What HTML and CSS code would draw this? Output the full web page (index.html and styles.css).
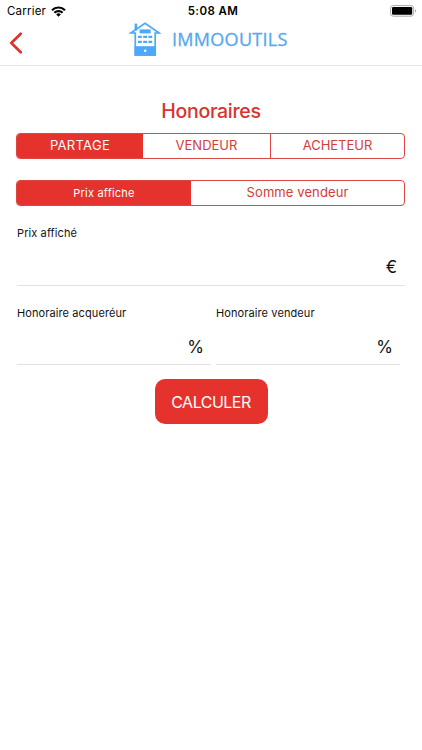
FILE: index.html
```html
<!DOCTYPE html>
<html lang="fr">
<head>
    <meta charset="UTF-8">
    <meta name="viewport" content="width=device-width, initial-scale=1.0">
    <title>Immooutils - Honoraires</title>
    <link rel="stylesheet" href="styles.css">
</head>
<body>
    <div class="status-bar">
        <div class="carrier">
            <span>Carrier</span>
            <svg class="wifi" width="15" height="11" viewBox="0 0 15 11" fill="none" stroke="#000" stroke-width="2.2">
                <path d="M1 4.2a9.2 9.2 0 0 1 13 0"/>
                <path d="M3.4 6.8a5.8 5.8 0 0 1 8.2 0"/>
                <path d="M7.5 10.7L5.2 8.5a3.2 3.2 0 0 1 4.6 0z" fill="#000" stroke="none"/>
            </svg>
        </div>
        <div class="time">5:08 AM</div>
        <svg class="battery" width="27" height="12" viewBox="0 0 27 12">
            <rect x="0.6" y="0.6" width="23" height="10.6" rx="2.6" fill="#fff" stroke="#a8a8a8"/>
            <rect x="2" y="2" width="20.2" height="7.8" rx="1.2" fill="#000"/>
            <path d="M25 4.2c1.6.5 1.6 2.9 0 3.4z" fill="#a8a8a8"/>
        </svg>
    </div>

    <header class="header">
        <a class="back" href="#" aria-label="Retour">
            <svg width="14" height="22" viewBox="0 0 14 22" fill="none" stroke="#dc342f" stroke-width="2.7" stroke-linecap="round" stroke-linejoin="round">
                <path d="M11.7 1.7L2.3 11l9.4 9.3"/>
            </svg>
        </a>
        <div class="logo">
            <svg width="32" height="35" viewBox="0 0 32 35" fill="none" stroke="#4ca8f8">
                <path d="M6.9 8.5V1.6" stroke-width="2.6"/>
                <path d="M1.8 11L16 1.4 30.2 11h-4V33H6.3V11z" stroke-width="1.7"/>
                <rect x="5.5" y="24.2" width="21.5" height="9.6" fill="#4ca8f8" stroke="none"/>
                <rect x="10.6" y="7.4" width="11" height="4" fill="#4ca8f8" stroke="none"/>
                <path d="M9 14.9h3.8m1.4 0h3.8m1.4 0h3.8M9 19.9h3.8m1.4 0h3.8m1.4 0h3.8" stroke-width="2.4"/>
                <circle cx="16.2" cy="28.8" r="1.3" fill="#fff" stroke="none"/>
            </svg>
            <span class="logo-text">IMMOOUTILS</span>
        </div>
    </header>

    <main class="container">
        <h1>Honoraires</h1>

        <div class="segment segment-three">
            <button class="tab active">PARTAGE</button>
            <button class="tab">VENDEUR</button>
            <button class="tab">ACHETEUR</button>
        </div>

        <div class="segment segment-two">
            <button class="tab active small">Prix affiche</button>
            <button class="tab wide">Somme vendeur</button>
        </div>

        <div class="field">
            <div class="label">Prix affiché</div>
            <div class="unit">€</div>
        </div>

        <div class="row">
            <div class="field">
                <div class="label">Honoraire acqueréur</div>
                <div class="unit">%</div>
            </div>
            <div class="field">
                <div class="label">Honoraire vendeur</div>
                <div class="unit">%</div>
            </div>
        </div>

        <button class="btn">CALCULER</button>
    </main>
</body>
</html>
```
FILE: styles.css
```css
* { margin: 0; padding: 0; box-sizing: border-box; }

body {
    font-family: 'Inter', sans-serif;
    background: #fff;
    color: #111;
}

button {
    font-family: inherit;
    border: none;
    background: none;
}

.status-bar {
    display: grid;
    grid-template-columns: 1fr auto 1fr;
    align-items: center;
    height: 22px;
    padding: 0 5px 0 7px;
    color: #000;
}

.carrier {
    display: flex;
    align-items: center;
    gap: 5px;
    font-size: 11.5px;
    letter-spacing: 0.2px;
}

.time {
    padding-left: 2px;
    font-size: 11.5px;
    font-weight: 600;
    letter-spacing: 0.4px;
}

.battery {
    justify-self: end;
}

.header {
    display: grid;
    grid-template-columns: 120px 1fr;
    height: 44px;
    border-bottom: 1px solid #e4e4e4;
}

.back {
    padding: 10px 0 0 9px;
}

.logo {
    display: flex;
    align-items: flex-start;
    padding-left: 9px;
    gap: 11px;
}

.logo-text {
    font-family: 'Open Sans', sans-serif;
    font-size: 18px;
    line-height: 35px;
    letter-spacing: 0.3px;
    color: #55a8ec;
    -webkit-text-stroke: 0.3px #55a8ec;
}

.container {
    padding: 32px 17px 0;
}

h1 {
    color: #d8332f;
    font-size: 19.5px;
    font-weight: 500;
    line-height: 26px;
    letter-spacing: -0.3px;
    text-align: center;
    margin-bottom: 9px;
}

.segment {
    display: grid;
    height: 26px;
    margin-left: -1px;
    border: 1px solid #dc4742;
    border-radius: 4px;
    overflow: hidden;
    margin-bottom: 21px;
}

.segment-three {
    grid-template-columns: 126px 127px 1fr;
}

.segment-two {
    grid-template-columns: 174px 1fr;
    margin-bottom: 20px;
}

.tab {
    padding-bottom: 2px;
    color: #d43c39;
    font-size: 13px;
}

.tab + .tab {
    border-left: 1px solid #dc4742;
}

.tab.active {
    background: #e5322d;
    color: #fff;
    letter-spacing: 0.3px;
}

.tab.active + .tab {
    border-left: none;
}

.tab.small {
    padding-bottom: 0;
    font-size: 11px;
    letter-spacing: 0.2px;
}

.tab.wide {
    letter-spacing: 0.1px;
}

.field {
    border-bottom: 1px solid #e2e2e2;
}

.label {
    font-size: 11px;
    line-height: 14px;
    letter-spacing: 0.1px;
}

.unit {
    font-size: 17px;
    line-height: 20px;
    text-align: right;
    padding-right: 8px;
    margin: 17px 0 8px;
}

.row {
    display: grid;
    grid-template-columns: 194px 184px;
    gap: 5px;
    margin: 20px 0 14px;
}

.row .unit {
    padding-right: 7px;
    margin-bottom: 7px;
}

.btn {
    display: block;
    width: 113px;
    height: 45px;
    margin: 0 auto;
    border-radius: 10px;
    background: #e5322d;
    color: #fff;
    font-size: 16px;
    letter-spacing: -0.5px;
}
```
